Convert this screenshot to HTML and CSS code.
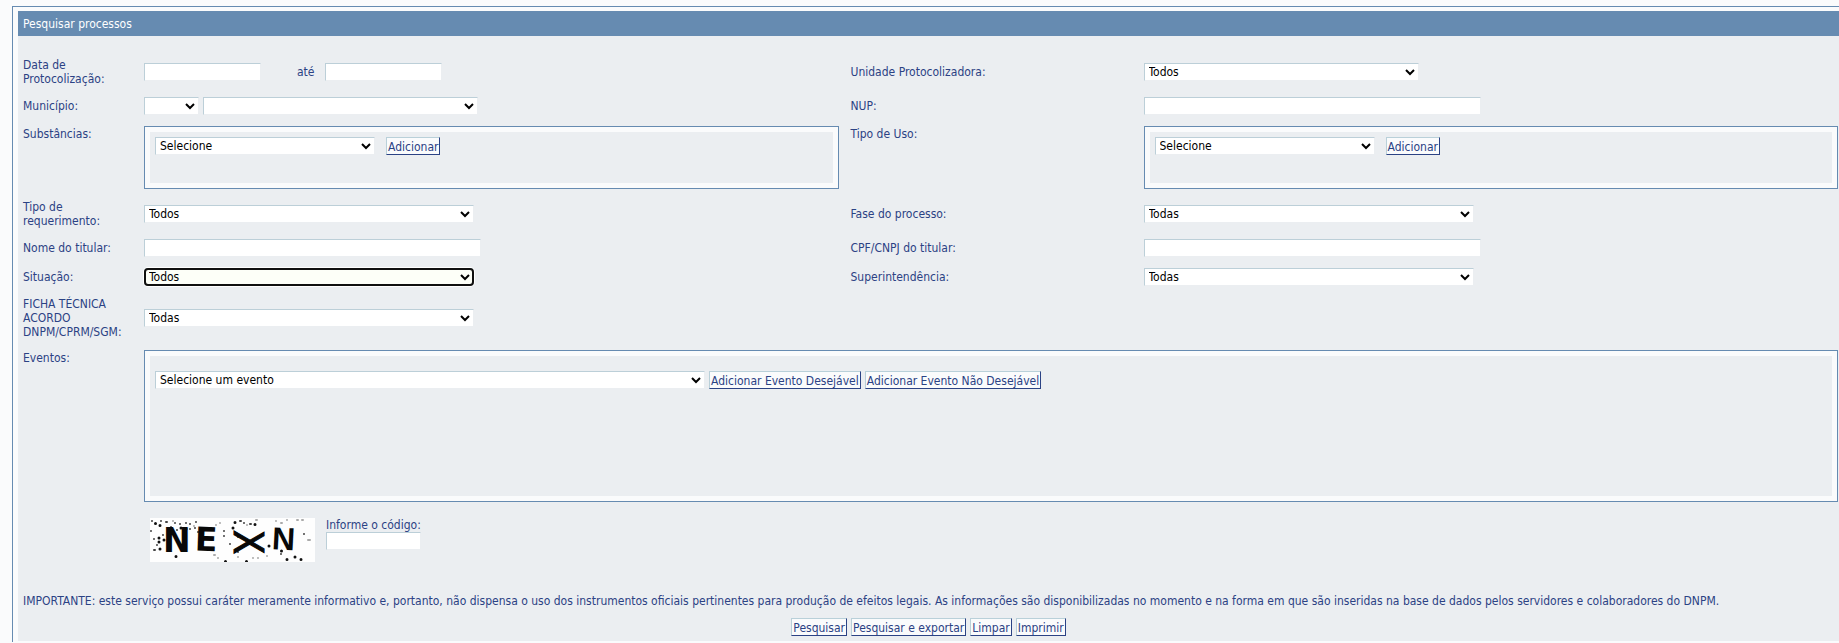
FILE: index.html
```html
<!DOCTYPE html>
<html lang="pt-BR">
<head>
    <meta charset="UTF-8">
    <meta name="viewport" content="width=device-width, initial-scale=1.0">
    <title>Pesquisar processos</title>
    <link rel="stylesheet" href="styles.css">
</head>
<body>
    <div class="frame">
        <form class="panel">
            <h1 class="title">Pesquisar processos</h1>

            <div class="fields">
                <label for="dataInicio">Data de Protocolização:</label>
                <div class="control">
                    <input type="text" id="dataInicio" class="date">
                    <label for="dataFim" class="until">até</label>
                    <input type="text" id="dataFim" class="date">
                </div>
                <label for="unidade">Unidade Protocolizadora:</label>
                <div class="control">
                    <select id="unidade" class="medium"><option>Todos</option></select>
                </div>

                <label for="municipio">Município:</label>
                <div class="control">
                    <select id="uf" class="uf" aria-label="UF"><option></option></select>
                    <select id="municipio" class="medium"><option></option></select>
                </div>
                <label for="nup">NUP:</label>
                <div class="control"><input type="text" id="nup" class="wide"></div>

                <label for="substancia" class="top">Substâncias:</label>
                <div class="box">
                    <select id="substancia" class="small"><option>Selecione</option></select>
                    <button type="button">Adicionar</button>
                </div>
                <label for="tipoUso" class="top">Tipo de Uso:</label>
                <div class="box">
                    <select id="tipoUso" class="small"><option>Selecione</option></select>
                    <button type="button">Adicionar</button>
                </div>

                <label for="requerimento">Tipo de requerimento:</label>
                <div class="control">
                    <select id="requerimento" class="large"><option>Todos</option></select>
                </div>
                <label for="fase">Fase do processo:</label>
                <div class="control">
                    <select id="fase" class="large"><option>Todas</option></select>
                </div>

                <label for="titular">Nome do titular:</label>
                <div class="control"><input type="text" id="titular" class="wide"></div>
                <label for="cpf">CPF/CNPJ do titular:</label>
                <div class="control"><input type="text" id="cpf" class="wide"></div>

                <label for="situacao">Situação:</label>
                <div class="control">
                    <select id="situacao" class="large active"><option>Todos</option></select>
                </div>
                <label for="superintendencia">Superintendência:</label>
                <div class="control">
                    <select id="superintendencia" class="large"><option>Todas</option></select>
                </div>

                <label for="ficha">FICHA TÉCNICA ACORDO DNPM/CPRM/SGM:</label>
                <div class="control full">
                    <select id="ficha" class="large"><option>Todas</option></select>
                </div>

                <label for="evento" class="top">Eventos:</label>
                <div class="box events full">
                    <select id="evento" class="event"><option>Selecione um evento</option></select>
                    <button type="button">Adicionar Evento Desejável</button>
                    <button type="button">Adicionar Evento Não Desejável</button>
                </div>
            </div>

            <!-- Captcha -->
            <div class="captcha">
                <svg class="code" width="165" height="44" viewBox="0 0 165 44" role="img" aria-label="Código de verificação">
                    <rect width="165" height="44" fill="#fefefe"/>
                    <g class="dots">
                        <path d="M5.5 5.5h0M10 7.5h0M9 20h0M9 24h0M14 22h0M10 31h0M26 38.5h0M85 4.5h0M83 10h0M31 10h0M36 11h0M137 41.5h0M145 39h0M151 41.5h0M96.5 43.5h0M75.5 43.5h0M119 28h0M131.5 33h0M105 6.5h0"/>
                    </g>
                    <g class="specks">
                        <path d="M2 3h0M11 3h0M16 4h1M21 9h0M25 5h0M30 6h0M36 5h0M40 6h0M46 4h0M45 10h0M1 13h0M4 32h1M7 27h0M34 32h0M74 18h0M74 13h0M94 5h0M90 3h1M100 6h1M88 19h0M80 26h0M88 34h0M131 36h0M154 16h0M48 14h0M19 12h0M13 17h0M27 12h0M40 11h0M4 21h0"/>
                    </g>
                    <g class="faint">
                        <path d="M70 5h0M68 40h0M64 37h1M106 2h1M88 39h0M103 40h0M117 38h0M131 5h1M137 2h0M147 2h1M152 2h1M158 22h2M108 40h0M23 3h0M44 8h0M66 7h0M97 7h0M126 3h0"/>
                    </g>
                    <text class="letter" x="13" y="34" font-size="33">N</text>
                    <text class="letter" x="45" y="33" font-size="33" transform="rotate(2 58 22)">E</text>
                    <text class="letter cross" x="98" y="38" font-size="40" text-anchor="middle" transform="rotate(90 98 24)">X</text>
                    <text class="letter plain" x="122" y="32" font-size="32" transform="rotate(3 134 21)">N</text>
                </svg>
                <div class="answer">
                    <label for="codigo">Informe o código:</label>
                    <input type="text" id="codigo">
                </div>
            </div>

            <p class="notice">IMPORTANTE: este serviço possui caráter meramente informativo e, portanto, não dispensa o uso dos instrumentos oficiais pertinentes para produção de efeitos legais. As informações são disponibilizadas no momento e na forma em que são inseridas na base de dados pelos servidores e colaboradores do DNPM.</p>

            <div class="actions">
                <button type="submit">Pesquisar</button>
                <button type="button">Pesquisar e exportar</button>
                <button type="reset">Limpar</button>
                <button type="button">Imprimir</button>
            </div>
        </form>
    </div>
</body>
</html>
```
FILE: styles.css
```css
* { box-sizing: border-box; }
body { margin: 0; padding: 6px 0 0 12px; background-color: #fafbfc; color: #2b4284; font-family: "DejaVu Sans Condensed", Tahoma, sans-serif; font-size: 12px; line-height: 14px; }
.frame { border: 1px solid #668bb1; border-width: 1px 0 0 1px; padding: 4px 0 1px 5px; }
.panel { background-color: #ebeef1; padding-bottom: 5px; }
.title { margin: 0; padding: 6px 5px 5px; background-color: #668bb1; color: #fff; font-size: 12px; line-height: 14px; font-weight: normal; }

.fields { display: grid; grid-template-columns: 109px 1fr 281px 1fr; gap: 11px 12px; align-items: center; padding: 22px 1px 0 5px; }
.control { display: flex; align-items: center; gap: 4px; min-height: 18px; }
.full { grid-column: 2 / -1; }
.top { align-self: start; padding-top: 1px; }
.until { padding: 0 6px 0 32px; }

input, select { height: 18px; margin: 0; border: 1px solid #bccfd8; border-right-color: #ebeef1; border-bottom-color: #ebeef1; border-radius: 0; background-color: #fff; color: #000; font-family: inherit; font-size: 12px; }
input { padding: 0 4px; }
select { padding: 0 2px 0 0; }
.date { width: 117px; }
.uf { width: 55px; }
.small { width: 220px; }
.medium { width: 275px; }
.large { width: 330px; }
.wide { width: 337px; }
.event { width: 550px; }
.active { border-radius: 4px; background-color: #fdfff8; outline: 2px solid #101010; outline-offset: -2px; box-shadow: 0 0 0 1px #fff; }

button { height: 18px; margin: 0; padding: 1px 1px 0; border: 1px solid #2b4284; border-top-color: #b9d0d9; border-left-color: #b9d0d9; background-color: #fafbfc; color: #2b4284; font-family: inherit; font-size: 12px; line-height: 14px; cursor: pointer; }

.box { display: flex; align-items: flex-start; gap: 11px; min-height: 63px; padding: 10px; border: 1px solid #668bb1; box-shadow: inset 0 0 0 5px #fafbfc; }
.events { gap: 4px; min-height: 152px; padding-top: 20px; }

.captcha { display: flex; gap: 11px; padding: 16px 0 0 132px; }
.answer { display: flex; flex-direction: column; }
.answer input { width: 95px; }
.dots, .specks, .faint { fill: none; stroke: #111; stroke-linecap: round; stroke-width: 3; }
.specks { stroke: #444; stroke-width: 2; }
.faint { stroke: #aaa; stroke-width: 2; }
.letter { font-family: "DejaVu Sans", sans-serif; font-weight: bold; fill: #080808; }
.cross { font-family: "DejaVu Sans Condensed", sans-serif; font-weight: normal; stroke: #080808; stroke-width: 1; }
.plain { font-family: "Liberation Sans", sans-serif; }

.notice { margin: 0; padding: 32px 5px 0; }
.actions { display: flex; justify-content: center; gap: 4px; padding-top: 10px; }
```
